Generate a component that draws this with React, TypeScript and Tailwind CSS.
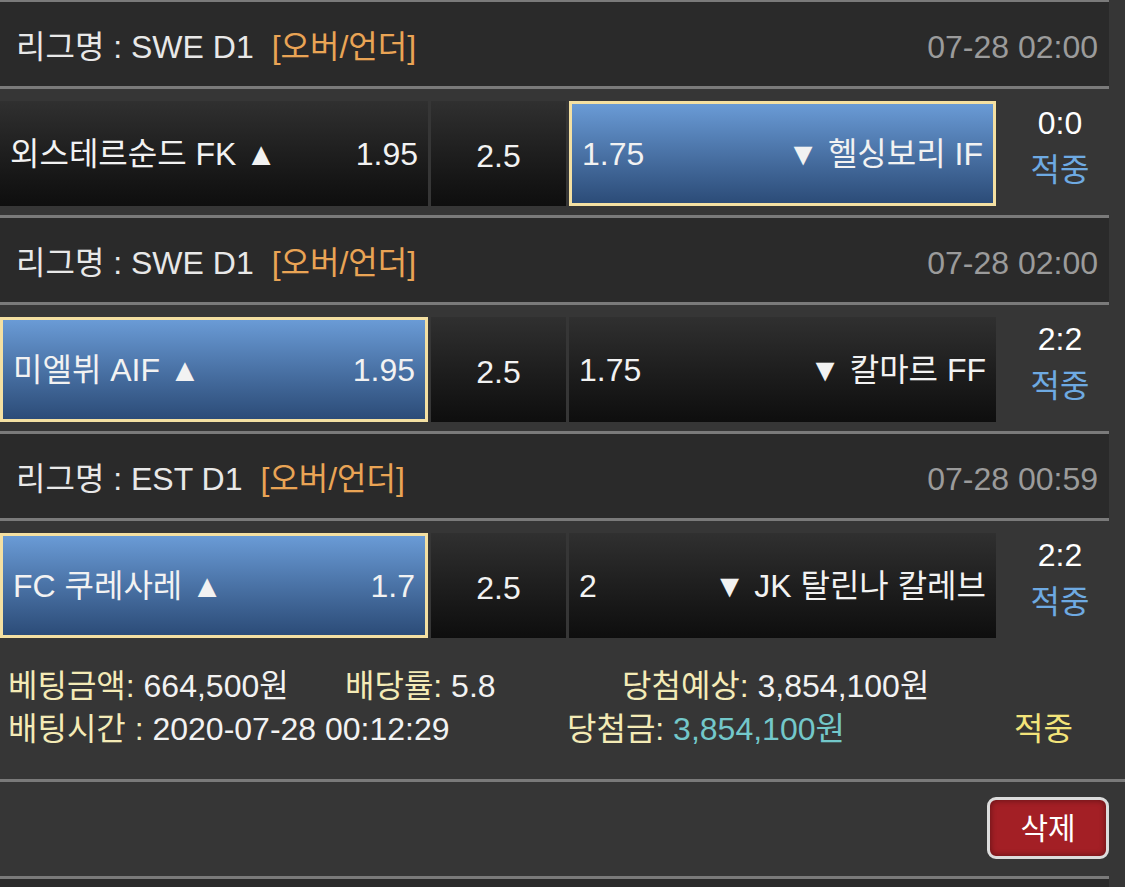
import React from 'react'

type Side = { name: string; odds: string; selected?: boolean }

type Match = {
    league: string
    time: string
    home: Side
    line: string
    away: Side
    score: string
}

const matches: Match[] = [
    {
        league: 'SWE D1',
        time: '07-28 02:00',
        home: { name: '외스테르순드 FK', odds: '1.95' },
        line: '2.5',
        away: { name: '헬싱보리 IF', odds: '1.75', selected: true },
        score: '0:0',
    },
    {
        league: 'SWE D1',
        time: '07-28 02:00',
        home: { name: '미엘뷔 AIF', odds: '1.95', selected: true },
        line: '2.5',
        away: { name: '칼마르 FF', odds: '1.75' },
        score: '2:2',
    },
    {
        league: 'EST D1',
        time: '07-28 00:59',
        home: { name: 'FC 쿠레사레', odds: '1.7', selected: true },
        line: '2.5',
        away: { name: 'JK 탈린나 칼레브', odds: '2' },
        score: '2:2',
    },
]

const cellBase = 'h-[105px] flex items-center justify-between px-[10px]'
const cellIdle = 'bg-linear-to-b from-[#303030] to-[#0e0e0e]'
const cellPicked =
    'bg-linear-to-b from-[#6a9bd6] to-[#2c4c78] border-[3px] border-[#f4e0a2]'

const Header = ({ league, time, first }: { league: string; time: string; first?: boolean }) => (
    <div
        className={`w-[1109px] bg-[#2a2a2a] border-b-[3px] border-[#7a7a7a] flex items-center justify-between pl-[16px] pr-[11px] pt-[5px] ${
            first ? 'h-[89px] border-t-2' : 'h-[90px] border-t-[3px]'
        }`}
    >
        <div className="text-[#e8e8e8]">
            리그명 : {league}
            <span className="ml-[18px] text-[#e9a455]">[오버/언더]</span>
        </div>
        <div className="text-[#9b9b9b]">{time}</div>
    </div>
)

const MatchRow = ({ m }: { m: Match }) => (
    <div className="flex pt-[12px] pb-[9px] gap-[3px]">
        <div className={`w-[428px] ${cellBase} ${m.home.selected ? cellPicked : cellIdle}`}>
            <span>{m.home.name} ▲</span>
            <span>{m.home.odds}</span>
        </div>
        <div className={`w-[135px] h-[105px] flex items-center justify-center pt-[4px] ${cellIdle}`}>
            {m.line}
        </div>
        <div className={`w-[427px] ${cellBase} ${m.away.selected ? cellPicked : cellIdle}`}>
            <span>{m.away.odds}</span>
            <span>▼ {m.away.name}</span>
        </div>
        <div className="w-[122px] flex flex-col items-center leading-[45px]">
            <span className="text-white">{m.score}</span>
            <span className="text-[#6eaae2] mt-[2px]">적중</span>
        </div>
    </div>
)

export default function App() {
    return (
        <div className="min-h-[887px] bg-[#363636] text-[32px] text-[#f2f2f2] font-['Liberation_Sans','Noto_Sans_CJK_KR',sans-serif] overflow-hidden">
            {matches.map((m, i) => (
                <div key={i}>
                    <Header league={m.league} time={m.time} first={i === 0} />
                    <MatchRow m={m} />
                </div>
            ))}
            <div className="pt-[18px] pb-[28px] leading-[43px] border-b-[3px] border-[#7a7a7a]">
                <div className="flex pl-[8px]">
                    <div className="w-[337px]">
                        <span className="text-[#f4ebb6]">베팅금액:</span> 664,500원
                    </div>
                    <div className="w-[277px]">
                        <span className="text-[#f4ebb6]">배당률:</span> 5.8
                    </div>
                    <div>
                        <span className="text-[#f4ebb6]">당첨예상:</span> 3,854,100원
                    </div>
                </div>
                <div className="flex pl-[8px]">
                    <div className="w-[559px]">
                        <span className="text-[#f4ebb6]">배팅시간 :</span> 2020-07-28 00:12:29
                    </div>
                    <div className="w-[447px]">
                        <span className="text-[#f4ebb6]">당첨금:</span>{' '}
                        <span className="text-[#73c8ca]">3,854,100원</span>
                    </div>
                    <div className="text-[#f3e47a]">적중</div>
                </div>
            </div>
            <div className="flex justify-end pr-[16px] pt-[15px] pb-[17px]">
                <button className="w-[122px] h-[62px] rounded-[9px] border-[3px] border-[#dcdcdc] bg-[#a31f25] shadow-[inset_0_0_6px_rgba(0,0,0,0.45)] text-white text-[30px] flex items-center justify-center">
                    삭제
                </button>
            </div>
            <div className="w-[1109px] h-[11px] bg-[#2a2a2a] border-t-[3px] border-[#7a7a7a]" />
        </div>
    )
}
